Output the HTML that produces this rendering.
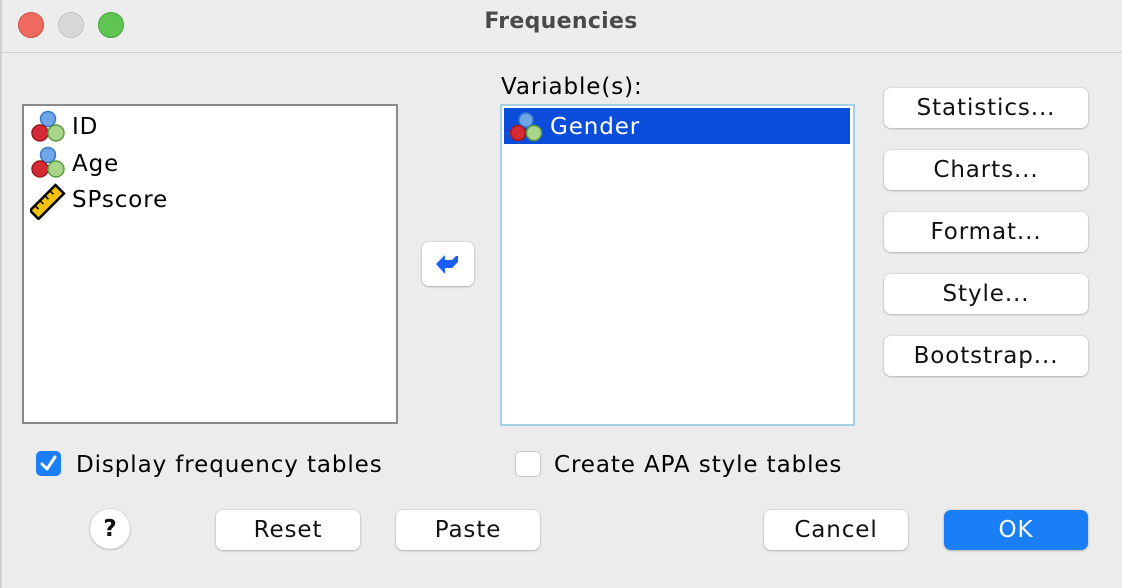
<!DOCTYPE html><html><head><style>
body{margin:0;width:1122px;height:588px;background:#ececec;font-family:"DejaVu Sans","Liberation Sans",sans-serif;overflow:hidden;position:relative}
.a{position:absolute}
.btn{position:absolute;background:#fff;border-radius:7px;box-shadow:0 0.5px 2px rgba(0,0,0,.35);font-size:23px;text-align:center;color:#111;box-sizing:border-box;letter-spacing:0.9px}
.dot{position:absolute;border-radius:50%}
.txt{position:absolute;font-size:23px;color:#000;letter-spacing:0.9px;white-space:nowrap}
</style></head><body>
<div class="a" style="left:0;top:0;width:1122px;height:52px;background:#ededed;border-bottom:1px solid #cfcfcf"></div>
<div class="a" style="left:0;top:0;width:2px;height:588px;background:#d0d0d0"></div>
<div class="dot" style="left:18px;top:12px;width:24px;height:24px;background:#ee6a5e;border:0.5px solid #d25248"></div>
<div class="dot" style="left:58px;top:12px;width:24px;height:24px;background:#d8d8d8;border:0.5px solid #c2c2c2"></div>
<div class="dot" style="left:98px;top:12px;width:24px;height:24px;background:#5fc452;border:0.5px solid #4aa73f"></div>
<div class="a" style="left:0;top:9px;width:1122px;text-align:center;font-size:22px;font-weight:bold;color:#4a4a4a;letter-spacing:0.3px">Frequencies</div>

<div class="a" style="left:22px;top:104px;width:372px;height:316px;background:#fff;border:2px solid #8a8a8a"></div>
<svg class="a" style="left:30px;top:110px" width="36" height="110">
<g><circle cx="18" cy="9" r="7.5" fill="#6fa6e6" stroke="#3a78c9" stroke-width="1.5"/><circle cx="10" cy="23" r="8" fill="#d42a35" stroke="#9a1822" stroke-width="1.5"/><circle cx="26" cy="23" r="8" fill="#a8d58a" stroke="#5d9a3c" stroke-width="1.5"/></g>
<g transform="translate(0,36)"><circle cx="18" cy="9" r="7.5" fill="#6fa6e6" stroke="#3a78c9" stroke-width="1.5"/><circle cx="10" cy="23" r="8" fill="#d42a35" stroke="#9a1822" stroke-width="1.5"/><circle cx="26" cy="23" r="8" fill="#a8d58a" stroke="#5d9a3c" stroke-width="1.5"/></g>
<g transform="translate(17,92) rotate(-45)"><rect x="-18" y="-6" width="36" height="12" fill="#f4c20d" stroke="#000" stroke-width="2.5"/><path d="M-11 -6v5M-4 -6v5M3 -6v5M10 -6v5" stroke="#000" stroke-width="1.5"/></g>
</svg>
<div class="txt" style="left:72px;top:114px">ID</div>
<div class="txt" style="left:72px;top:151px">Age</div>
<div class="txt" style="left:72px;top:187px">SPscore</div>

<div class="txt" style="left:501px;top:74px">Variable(s):</div>
<div class="a" style="left:500px;top:104px;width:351px;height:318px;background:#fff;border:2px solid #a2d0e6"></div>
<div class="a" style="left:504px;top:108px;width:346px;height:36px;background:#0a4ddb"></div>
<svg class="a" style="left:508px;top:111px" width="36" height="32"><circle cx="18" cy="9" r="7" fill="#6fa6e6" stroke="#3a78c9" stroke-width="1.5"/><circle cx="10" cy="22" r="7.5" fill="#d42a35" stroke="#9a1822" stroke-width="1.5"/><circle cx="26" cy="22" r="7.5" fill="#a8d58a" stroke="#5d9a3c" stroke-width="1.5"/></svg>
<div class="txt" style="left:550px;top:114px;color:#fff">Gender</div>

<div class="btn" style="left:422px;top:242px;width:52px;height:44px"></div>
<svg class="a" style="left:432px;top:250px" width="32" height="28"><path d="M4 14 L13 5 L13 10 L20 10 L24 6 L26 6 L26 12 L20 18 L13 18 L13 24 Z" fill="#1a5cf5"/></svg>

<div class="btn" style="left:884px;top:88px;width:204px;height:40px;line-height:40px">Statistics...</div>
<div class="btn" style="left:884px;top:150px;width:204px;height:40px;line-height:40px">Charts...</div>
<div class="btn" style="left:884px;top:212px;width:204px;height:40px;line-height:40px">Format...</div>
<div class="btn" style="left:884px;top:274px;width:204px;height:40px;line-height:40px">Style...</div>
<div class="btn" style="left:884px;top:336px;width:204px;height:40px;line-height:40px">Bootstrap...</div>

<div class="a" style="left:36px;top:451px;width:25px;height:25px;border-radius:5px;background:#1a7ff6"></div>
<svg class="a" style="left:36px;top:451px" width="25" height="25"><path d="M6 13 L11 18 L19 6" stroke="#fff" stroke-width="3" fill="none" stroke-linecap="round" stroke-linejoin="round"/></svg>
<div class="txt" style="left:76px;top:452px">Display frequency tables</div>
<div class="a" style="left:515px;top:451px;width:24px;height:24px;border-radius:5px;background:#fff;border:1px solid #c8c8c8"></div>
<div class="txt" style="left:554px;top:452px">Create APA style tables</div>

<div class="btn" style="left:90px;top:509px;width:40px;height:40px;border-radius:50%;line-height:40px;font-weight:bold;letter-spacing:0">?</div>
<div class="btn" style="left:216px;top:510px;width:144px;height:40px;line-height:40px">Reset</div>
<div class="btn" style="left:396px;top:510px;width:144px;height:40px;line-height:40px">Paste</div>
<div class="btn" style="left:764px;top:510px;width:144px;height:40px;line-height:40px">Cancel</div>
<div class="btn" style="left:944px;top:510px;width:144px;height:40px;line-height:40px;background:#1a7ff6;color:#fff">OK</div>
</body></html>
